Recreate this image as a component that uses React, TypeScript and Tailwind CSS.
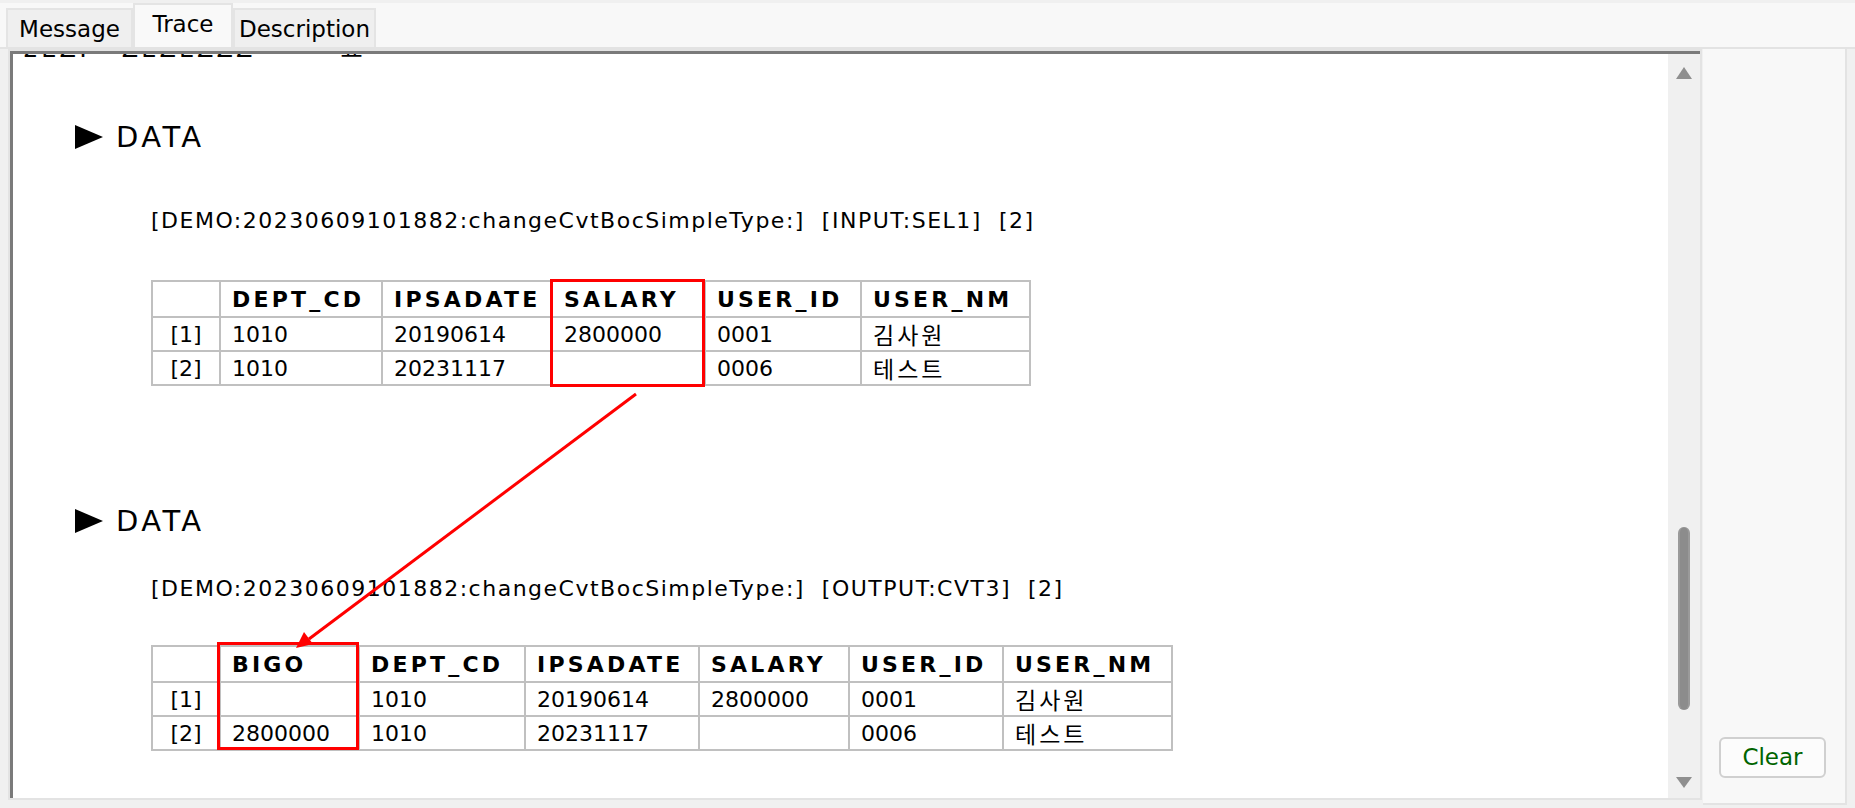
import React from "react";

const FONT = "font-['DejaVu_Sans','Noto_Sans_CJK_KR',sans-serif]";
const GRID = "border-2 border-[#c0c0c0]";

type TableSpec = {
  cols: string[];
  widths: string[];
  rows: string[][];
};

const inputTable: TableSpec = {
  cols: ["DEPT_CD", "IPSADATE", "SALARY", "USER_ID", "USER_NM"],
  widths: ["w-[68px]", "w-[162px]", "w-[170px]", "w-[153px]", "w-[156px]", "w-[169px]"],
  rows: [
    ["1010", "20190614", "2800000", "0001", "김사원"],
    ["1010", "20231117", "", "0006", "테스트"],
  ],
};

const outputTable: TableSpec = {
  cols: ["BIGO", "DEPT_CD", "IPSADATE", "SALARY", "USER_ID", "USER_NM"],
  widths: ["w-[68px]", "w-[139px]", "w-[166px]", "w-[174px]", "w-[150px]", "w-[154px]", "w-[169px]"],
  rows: [
    ["", "1010", "20190614", "2800000", "0001", "김사원"],
    ["2800000", "1010", "20231117", "", "0006", "테스트"],
  ],
};

function isHangul(s: string) {
  return /[가-힣]/.test(s);
}

function DataTable({ spec }: { spec: TableSpec }) {
  return (
    <table className={`table-fixed border-collapse ${GRID}`}>
      <colgroup>
        {spec.widths.map((w, i) => (
          <col key={i} className={w} />
        ))}
      </colgroup>
      <thead>
        <tr className="h-[36px]">
          <th className={`${GRID} p-0`} />
          {spec.cols.map((c) => (
            <th
              key={c}
              className={`${GRID} whitespace-nowrap p-0 pl-[11px] pt-[2px] text-left text-[22px] leading-[26px] font-bold tracking-[3.2px] text-black`}
            >
              {c}
            </th>
          ))}
        </tr>
      </thead>
      <tbody>
        {spec.rows.map((row, r) => (
          <tr key={r} className="h-[34px]">
            <td className={`${GRID} p-0 pt-[2px] text-center text-[22px] leading-[26px]`}>[{r + 1}]</td>
            {row.map((v, i) => (
              <td key={i} className={`${GRID} p-0 pl-[11px] pt-[2px] text-[22px] leading-[26px]`}>
                {isHangul(v) ? (
                  <span className="text-[23px] leading-[26px] tracking-[3px] font-['Noto_Sans_CJK_KR',sans-serif]">
                    {v}
                  </span>
                ) : (
                  v
                )}
              </td>
            ))}
          </tr>
        ))}
      </tbody>
    </table>
  );
}

function Heading() {
  return (
    <div className="flex h-[30px] items-center pl-[61px]">
      <svg width="30" height="26" viewBox="0 0 30 26">
        <polygon points="1,1 29,13 1,25" fill="#000" />
      </svg>
      <span className="ml-[12px] text-[29px] leading-[30px] tracking-[3.5px]">DATA</span>
    </div>
  );
}

function Tab({ label, active }: { label: string; active?: boolean }) {
  return (
    <div
      className={
        active
          ? "flex h-[44px] w-[100px] items-center justify-center border-x-2 border-t-2 border-[#e4e4e4] bg-[#f9f9f9] pb-[4px] text-[23px] leading-[28px]"
          : "flex h-[39px] items-center justify-center whitespace-nowrap border-x-2 border-t-2 border-[#e4e4e4] bg-[#efefef] text-[23px] leading-[28px]"
      }
    >
      {label}
    </div>
  );
}

export default function App() {
  return (
    <div className={`flex h-[808px] w-[1855px] flex-col bg-[#f0f0f0] text-black ${FONT}`}>
      <div className="mt-[3px] flex h-[46px] items-end border-b-2 border-[#e3e3e3] bg-[#f8f8f8] pl-[6px]">
        <div className="w-[127px]">
          <Tab label="Message" />
        </div>
        <Tab label="Trace" active />
        <div className="w-[143px]">
          <Tab label="Description" />
        </div>
      </div>

      <div className="flex">
        <div className="ml-[8px] h-[751px] w-[1694px] border-2 border-[#e3e3e3]">
          <div className="flex h-full border-l-[3px] border-t-[3px] border-[#7a7a7a] bg-white">
            <div className="relative flex-1 overflow-hidden">
              {/* line scrolled mostly out of view */}
              <div className="h-[4px] overflow-hidden">
                <div className="-mt-[7px] h-[4px] whitespace-nowrap pl-[10px] text-[24px] leading-[4px] tracking-[3px]">
                  2EZ:&nbsp;&nbsp; ZEZEZZZ&nbsp;&nbsp;&nbsp;&nbsp;&nbsp;&nbsp;&nbsp; 표
                </div>
              </div>

              <div className="mt-[64px]">
                <Heading />
              </div>
              <div className="mt-[54px] whitespace-nowrap pl-[138px] text-[22px] leading-[30px] tracking-[1.5px]">
                [DEMO:20230609101882:changeCvtBocSimpleType:]&nbsp; [INPUT:SEL1]&nbsp; [2]
              </div>
              <div className="relative ml-[138px] mt-[44px] w-fit">
                <DataTable spec={inputTable} />
                <div className="absolute -top-[1px] left-[399px] h-[108px] w-[155px] border-[3px] border-[#ff0000]" />
              </div>

              <div className="mt-[120px]">
                <Heading />
              </div>
              <div className="mt-[38px] whitespace-nowrap pl-[138px] text-[22px] leading-[30px] tracking-[1.5px]">
                [DEMO:20230609101882:changeCvtBocSimpleType:]&nbsp; [OUTPUT:CVT3]&nbsp; [2]
              </div>
              <div className="relative ml-[138px] mt-[41px] w-fit">
                <DataTable spec={outputTable} />
                <div className="absolute -top-[3px] left-[66px] h-[108px] w-[142px] border-[3px] border-[#ff0000]" />
              </div>

              <svg className="pointer-events-none absolute left-0 top-0" width="1654" height="744">
                <line x1="623" y1="340" x2="296" y2="585" stroke="#ff0000" strokeWidth="3" />
                <polygon points="283,594 300,590 291,578" fill="#ff0000" />
              </svg>
            </div>

            <div className="flex w-[32px] flex-col items-center bg-[#f0f0f0]">
              <svg className="mt-[13px]" width="16" height="12" viewBox="0 0 16 12">
                <polygon points="8,0 16,12 0,12" fill="#8f8f8f" />
              </svg>
              <div className="mt-[448px] h-[183px] w-[12px] rounded-full border-x-2 border-[#9a9a9a] bg-[#8c8c8c]" />
              <svg className="mt-[67px]" width="16" height="11" viewBox="0 0 16 11">
                <polygon points="0,0 16,0 8,11" fill="#8f8f8f" />
              </svg>
            </div>
          </div>
        </div>

        <div className="ml-[1px] flex h-[756px] w-[144px] flex-col justify-end border-b-2 border-r-2 border-[#e3e3e3] bg-[#f8f8f8] pb-[25px] pl-[16px]">
          <button className="h-[41px] w-[107px] rounded-[6px] border-2 border-[#d0d0d0] bg-[#fcfcfc] text-[23px] text-[#006400]">
            Clear
          </button>
        </div>
      </div>
    </div>
  );
}
